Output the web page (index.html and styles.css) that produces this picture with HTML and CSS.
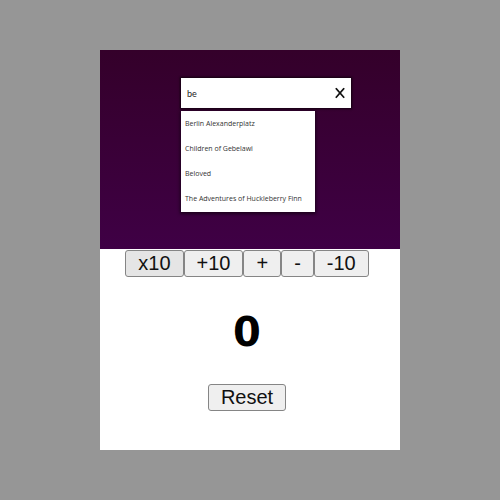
FILE: index.html
```html
<!DOCTYPE html>
<html lang="en">
<head>
<meta charset="utf-8">
<title>Search and counter</title>
<link rel="stylesheet" href="styles.css">
</head>
<body>
<main class="card">
  <section class="search">
    <form class="search-box">
      <input class="search-input" type="text" value="be" aria-label="Search books">
      <button class="clear" type="reset" aria-label="Clear">
        <svg width="10" height="12" viewBox="0 0 10 12"><path d="M.8 1.2 9.2 10.8M9.2 1.2.8 10.8" fill="none" stroke="#111" stroke-width="1.7"/></svg>
      </button>
    </form>
    <ul class="results">
      <li>Berlin Alexanderplatz</li>
      <li>Children of Gebelawi</li>
      <li>Beloved</li>
      <li>The Adventures of Huckleberry Finn</li>
    </ul>
  </section>
  <section class="counter">
    <div class="controls">
      <button class="btn btn-active" type="button">x10</button>
      <button class="btn" type="button">+10</button>
      <button class="btn" type="button">+</button>
      <button class="btn" type="button">-</button>
      <button class="btn" type="button">-10</button>
    </div>
    <output class="value">0</output>
    <button class="btn" type="button">Reset</button>
  </section>
</main>
</body>
</html>
```

FILE: styles.css
```css
* {
  box-sizing: border-box;
}

body {
  margin: 0;
  padding: 50px 20%;
  min-height: 100vh;
  display: flex;
  background: #969696;
  font-family: "Liberation Sans", Arial, sans-serif;
}

.card {
  flex: 1;
  display: flex;
  flex-direction: column;
  background: #fff;
}

.search {
  padding: 28px 49px 37px 81px;
  background: linear-gradient(#34002a, #3f0045);
}

.search-box {
  display: flex;
  height: 30px;
  margin-bottom: 3px;
  background: #fff;
  box-shadow: 0 0 2px 1px #12000f;
}

.search-input {
  flex: 1;
  min-width: 0;
  padding: 0 6px;
  border: 0;
  outline: 0;
  background: none;
  color: #222;
  font: 9px Lato, sans-serif;
}

.clear {
  display: flex;
  align-items: center;
  padding: 0 6px;
  border: 0;
  background: none;
}

.results {
  width: 134px;
  margin: 0;
  padding: 0 4px;
  list-style: none;
  background: #fff;
  box-shadow: 0 1px 3px 1px #1c001c;
  color: #333;
  font: 7px/25px "Open Sans", sans-serif;
}

.results li {
  white-space: nowrap;
}

.results li:last-child {
  line-height: 26px;
}

.counter {
  flex: 1;
  display: flex;
  flex-direction: column;
  align-items: center;
  padding-top: 1px;
}

.controls {
  display: flex;
  margin-right: 6px;
}

.btn {
  height: 27px;
  padding: 0 12px 1px;
  border: 1px solid #858585;
  border-radius: 3px;
  background: #efefef;
  color: #111;
  font: 20px/24px "Liberation Sans", Arial, sans-serif;
}

.btn-active {
  background: #e5e5e5;
}

.counter > .btn {
  margin-right: 6px;
}

.value {
  margin: 31px 6px 28px 0;
  color: #000;
  font: bold 40px/48px "DejaVu Sans", sans-serif;
}
```
